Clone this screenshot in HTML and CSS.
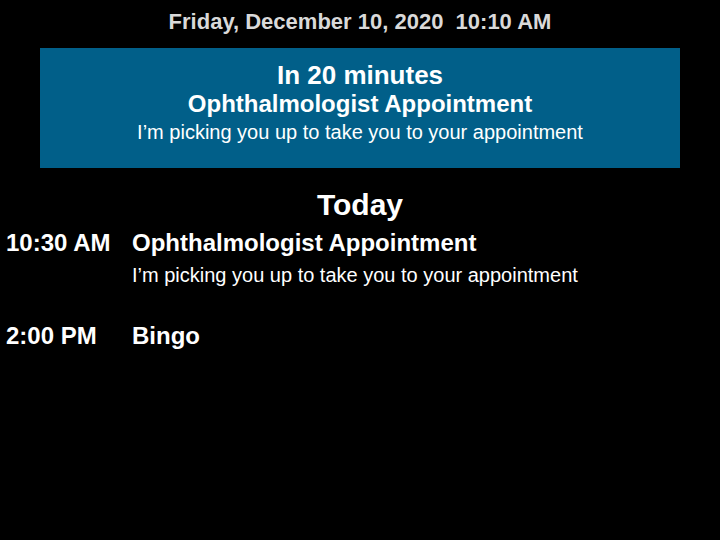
FILE: index.html
```html
<!DOCTYPE html>
<html>
<head>
<meta charset="utf-8">
<link rel="stylesheet" href="styles.css">
</head>
<body>
<div class="clock">Friday, December 10, 2020&nbsp; 10:10 AM</div>
<div class="alert">
  <div class="alert-when">In 20 minutes</div>
  <div class="alert-title">Ophthalmologist Appointment</div>
  <div class="alert-note">I’m picking you up to take you to your appointment</div>
</div>
<div class="day">Today</div>
<div class="events">
  <div class="event">
    <div class="time">10:30 AM</div>
    <div class="info">
      <div class="title">Ophthalmologist Appointment</div>
      <div class="note">I’m picking you up to take you to your appointment</div>
    </div>
  </div>
  <div class="event">
    <div class="time">2:00 PM</div>
    <div class="info">
      <div class="title">Bingo</div>
    </div>
  </div>
</div>
</body>
</html>
```
FILE: styles.css
```css
html, body {
  margin: 0;
  padding: 0;
  background: #000;
}
body {
  font-family: "Liberation Sans", Arial, sans-serif;
  color: #fff;
  padding-top: 9px;
}
.clock {
  text-align: center;
  font-size: 22px;
  font-weight: bold;
  line-height: 26px;
  color: #d9d9d9;
}
.alert {
  margin: 13px 40px 0;
  height: 120px;
  box-sizing: border-box;
  background: #015f89;
  text-align: center;
  padding-top: 13px;
}
.alert-when {
  font-size: 26px;
  font-weight: bold;
  line-height: 29px;
}
.alert-title {
  font-size: 24px;
  font-weight: bold;
  line-height: 28px;
}
.alert-note {
  font-size: 20px;
  line-height: 28px;
}
.day {
  text-align: center;
  font-size: 30px;
  font-weight: bold;
  line-height: 36px;
  margin-top: 19px;
}
.events {
  padding-left: 6px;
  margin-top: 5px;
}
.event {
  display: flex;
  margin-bottom: 29px;
}
.time {
  width: 126px;
  flex: none;
  font-size: 24px;
  font-weight: bold;
  line-height: 30px;
}
.title {
  font-size: 24px;
  font-weight: bold;
  line-height: 30px;
}
.note {
  font-size: 20px;
  line-height: 34px;
}
```
